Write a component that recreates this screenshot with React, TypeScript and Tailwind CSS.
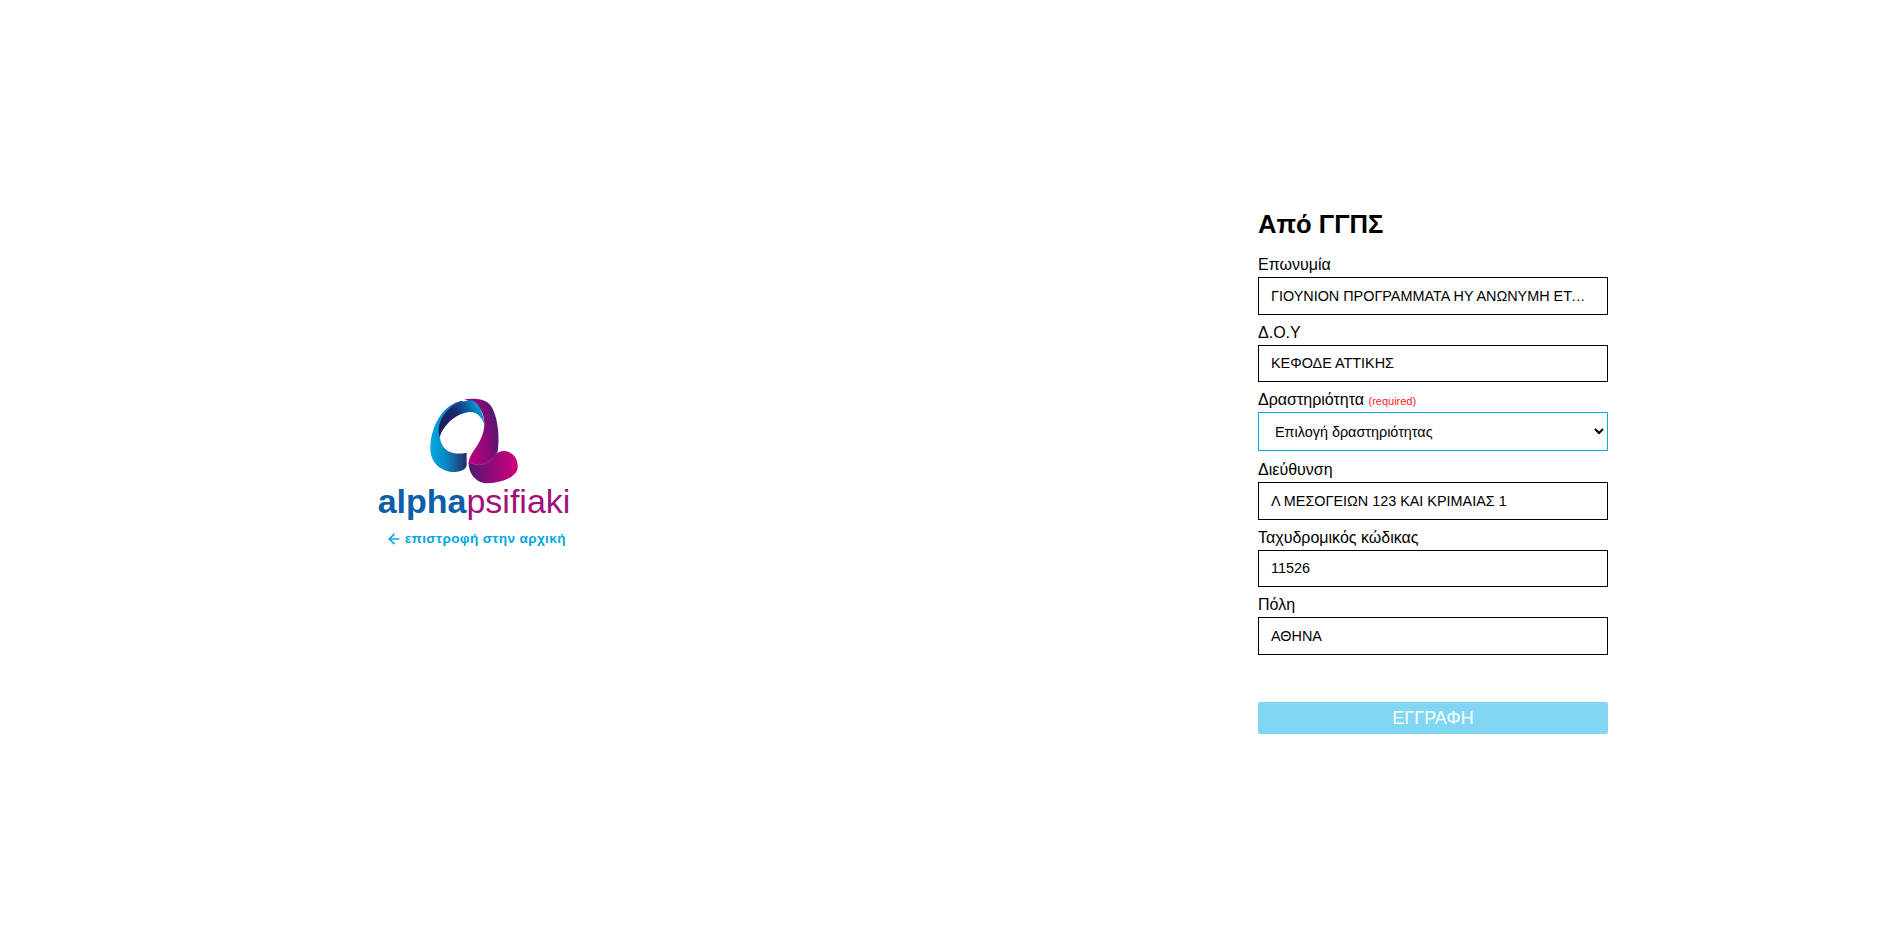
import React from "react";
import { ArrowLeft } from "lucide-react";

const fields = [
  { label: "Επωνυμία", value: "ΓΙΟΥΝΙΟΝ ΠΡΟΓΡΑΜΜΑΤΑ ΗΥ ΑΝΩΝΥΜΗ ΕΤΑΙΡΕΙΑ ΠΑΡΟΧΗΣ ΥΠΗΡΕΣΙΩΝ" },
  { label: "Δ.Ο.Υ", value: "ΚΕΦΟΔΕ ΑΤΤΙΚΗΣ" },
];
const fields2 = [
  { label: "Διεύθυνση", value: "Λ ΜΕΣΟΓΕΙΩΝ 123 ΚΑΙ ΚΡΙΜΑΙΑΣ 1" },
  { label: "Ταχυδρομικός κώδικας", value: "11526" },
  { label: "Πόλη", value: "ΑΘΗΝΑ" },
];

const Field = ({ label, value }: { label: string; value: string }) => (
  <div className="mb-[9px]">
    <label className="block text-[16px] leading-[18px] mb-[3px] text-black">{label}</label>
    <input
      readOnly
      value={value}
      className="block w-full h-[37.5px] border border-black pl-3 pr-[16px] text-[14.4px] text-black text-ellipsis outline-none"
    />
  </div>
);

const Logo = () => (
  <svg width="110" height="92" viewBox="0 0 330 276" fill="none">
    <defs>
      <linearGradient id="lgA" gradientUnits="userSpaceOnUse" x1="28" y1="0" x2="137" y2="0">
        <stop offset="0" stopColor="#00a9e0" />
        <stop offset="0.45" stopColor="#0a86c0" />
        <stop offset="1" stopColor="#272a68" />
      </linearGradient>
      <linearGradient id="lgB" gradientUnits="userSpaceOnUse" x1="70" y1="100" x2="180" y2="40">
        <stop offset="0" stopColor="#1b1f5e" />
        <stop offset="0.4" stopColor="#1b2a6e" />
        <stop offset="0.7" stopColor="#0b62a6" />
        <stop offset="1" stopColor="#00aee2" />
      </linearGradient>
      <linearGradient id="lgC" gradientUnits="userSpaceOnUse" x1="140" y1="120" x2="235" y2="100">
        <stop offset="0" stopColor="#b4007e" />
        <stop offset="0.55" stopColor="#860a78" />
        <stop offset="1" stopColor="#4b1a70" />
      </linearGradient>
      <linearGradient id="lgD" gradientUnits="userSpaceOnUse" x1="145" y1="0" x2="290" y2="0">
        <stop offset="0" stopColor="#4a1d72" />
        <stop offset="0.45" stopColor="#8f0a78" />
        <stop offset="1" stopColor="#d2007a" />
      </linearGradient>
    </defs>
    <path
      d="M125 26C65 35 28 105 28 170C28 215 65 242 105 240C122 238 135 232 137 220L137 182C110 188 85 185 70 168C60 155 55 140 58 125C62 95 80 65 125 45Z"
      fill="url(#lgA)"
    />
    <path
      d="M130 22C165 18 200 20 215 50C232 85 236 140 230 180L215 202L190 232L146 222L143 215C142 195 160 175 172 155C190 125 198 90 180 55C170 38 150 30 130 22Z"
      fill="url(#lgC)"
    />
    <path
      d="M56 135C42 85 85 28 150 25C172 28 186 60 191 100C184 78 170 60 148 60C108 62 70 95 56 135Z"
      fill="url(#lgB)"
    />
    <path
      d="M143 212C160 222 195 222 215 197C222 188 228 182 236 179C244 176 250 177 256 178C280 182 292 205 290 228C286 255 245 272 200 274C170 274 143 250 143 212Z"
      fill="url(#lgD)"
    />
    <path d="M147 212C170 224 198 220 215 197" stroke="#ffffff" strokeOpacity="0.3" strokeWidth="1.5" />
  </svg>
);

export default function App() {
  return (
    <div className="grid grid-cols-2 items-center min-h-screen bg-white font-['Liberation_Sans',Arial,sans-serif]">
      <div className="flex flex-col items-center pb-[3px]">
        <Logo />
        <div className="text-[34px] leading-[34px] whitespace-nowrap pr-[4px]">
          <span className="font-bold text-[#0a5fa8]">alpha</span>
          <span className="text-[#a0107e]">psifiaki</span>
        </div>
        <a className="mt-[13px] flex items-center gap-[2.5px] text-[13.6px] leading-[16px] font-bold tracking-[0.35px] text-[#00a8df]">
          <ArrowLeft size={16} strokeWidth={2.5} />
          επιστροφή στην αρχική
        </a>
      </div>
      <div className="flex justify-center pl-[10px]">
        <form className="w-[350px]">
          <h2 className="text-[25.6px] leading-[33px] font-bold text-black mb-[15px]">Από ΓΓΠΣ</h2>
          {fields.map((f) => (
            <Field key={f.label} {...f} />
          ))}
          <div className="mb-[10px]">
            <label className="block text-[16px] leading-[18px] mb-[2px] text-black">
              Δραστηριότητα <span className="text-[11px] text-[#ff2020]">(required)</span>
            </label>
            <select className="block w-full h-[39px] border border-[#00aee0] px-3 text-[14.4px] text-black bg-white outline-none appearance-auto">
              <option>Επιλογή δραστηριότητας</option>
            </select>
          </div>
          {fields2.map((f) => (
            <Field key={f.label} {...f} />
          ))}
          <button
            type="button"
            className="block w-full h-[32px] mt-[47.5px] rounded-[2px] bg-[#80d6f3] text-white text-[18px]"
          >
            ΕΓΓΡΑΦΗ
          </button>
        </form>
      </div>
    </div>
  );
}
